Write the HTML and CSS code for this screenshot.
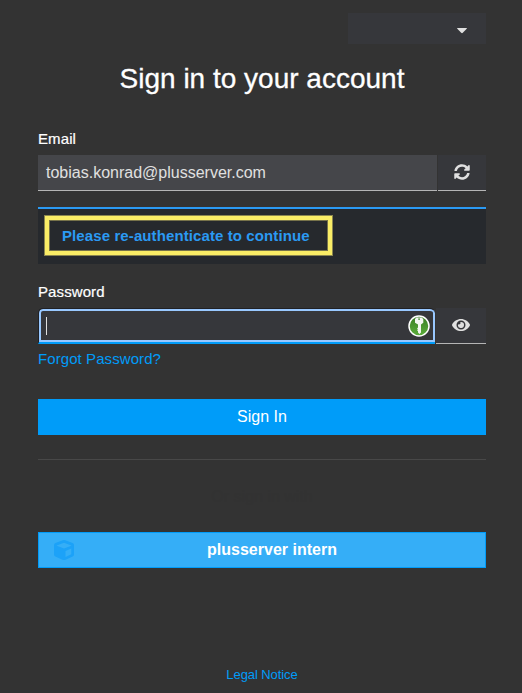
FILE: index.html
```html
<!DOCTYPE html>
<html lang="en">
<head>
<meta charset="utf-8">
<title>Sign in to your account</title>
<link rel="stylesheet" href="styles.css">
</head>
<body>
<main class="login">
  <div class="locale"><svg width="10" height="6" viewBox="0 0 10 6"><path d="M.5 0h9q.8 0 .2.7L5.800 4.800q-.8.8-1.600 0L.3.7Q-.3 0 .5 0z" fill="#e0e0e0"/></svg></div>
  <h1 class="title"><span>Sign in to your account</span></h1>
  <div class="label"><span>Email</span></div>
  <div class="group">
    <div class="field"><span class="email">tobias.konrad@plusserver.com</span></div>
    <button class="addon restart" aria-label="Restart login"><svg width="16" height="16" viewBox="0 0 512 512"><path fill="#e0e0e0" d="M370.7 133.3C339.5 104 298.900 88 255.800 88c-77.500.1-144.300 53.200-162.800 126.900-1.300 5.400-6.100 9.100-11.700 9.100H24.100c-7.500 0-13.200-6.800-11.800-14.200C33.900 94.900 134.800 8 256 8c66.400 0 126.800 26.100 171.300 68.700L463 41c15.100-15.100 41-4.400 41 17v134c0 13.300-10.700 24-24 24H346c-21.400 0-32.100-25.900-17-41l41.700-41.700zM32 296h134c21.400 0 32.100 25.900 17 41l-41.800 41.800c31.300 29.300 71.800 45.300 114.900 45.300 77.400-.1 144.300-53.100 162.800-126.800 1.300-5.400 6.100-9.100 11.700-9.100h57.300c7.500 0 13.200 6.800 11.800 14.200C478.100 417.100 377.200 504 256 504c-66.400 0-126.800-26.100-171.300-68.700L49 471c-15.100 15.100-41 4.400-41-17V320c0-13.300 10.700-24 24-24z"/></svg></button>
  </div>
  <div class="alert"><div class="highlight"><strong>Please re-authenticate to continue</strong></div></div>
  <div class="label"><span class="password-label">Password</span></div>
  <div class="group">
    <div class="field password"><i class="caret"></i>
      <svg class="key" width="24" height="24" viewBox="0 0 24 24"><defs><linearGradient id="g" x2="0" y2="1"><stop stop-color="#397d24"/><stop offset="1" stop-color="#5cae3b"/></linearGradient></defs><circle cx="12" cy="12" r="10" fill="url(#g)" stroke="#fff" stroke-width="1.500"/><path fill="#f4f6f2" fill-rule="evenodd" d="M9.500 3.500h5L16.300 5v3.700L14 10.400v8.200l-1.500 1.500-1.500-1.500v-1.500l-1-.8 1-1-1-.9 1-1v-3L8 8.700V5zM11.200 4.500v1.300h1.800V4.500z"/></svg>
    </div>
    <button class="addon eye" aria-label="Show password"><svg width="18" height="16" viewBox="0 0 576 512"><path fill="#e0e0e0" d="M572.5 241.4C518.300 135.600 410.900 64 288 64S57.700 135.600 3.500 241.400a32.400 32.400 0 0 0 0 29.200C57.700 376.400 165.100 448 288 448s230.300-71.600 284.500-177.400a32.400 32.400 0 0 0 0-29.200zM288 400a144 144 0 1 1 144-144 143.900 143.900 0 0 1-144 144zm0-240a95.300 95.300 0 0 0-25.300 3.800 47.900 47.900 0 0 1-66.900 66.900A95.800 95.800 0 1 0 288 160z"/></svg></button>
  </div>
  <a class="forgot"><span>Forgot Password?</span></a>
  <button class="submit"><span>Sign In</span></button>
  <hr>
  <div class="social">Or sign in with</div>
  <button class="provider"><svg width="20" height="20" viewBox="0 0 20 20"><path fill="#1ca2f8" fill-rule="evenodd" d="M8.700.3q1.300-.5 2.600 0l7.200 2.700Q20 3.600 20 5.100v9.300q0 1.500-1.300 2.200L11 20q-1 .5-2 0l-7.700-3.400Q0 15.900 0 14.400V5.100Q0 3.600 1.500 3zM10 2.800 2.700 5.500v.2L10 8.500l7.300-2.800v-.2zM11.500 11v5.900l5.800-2.700V8.600z"/></svg><strong>plusserver intern</strong></button>
  <footer><a>Legal Notice</a></footer>
</main>
</body>
</html>
```
FILE: styles.css
```css
* { box-sizing: border-box; }
body { margin: 0; background: #333; color: #fff; font: 16px/24px "Liberation Sans", Arial, sans-serif; }
.login { width: 448px; height: 693px; margin-left: 38px; padding-top: 13px; display: flex; flex-direction: column; }
svg { display: block; flex: none; }
span, strong { white-space: nowrap; }
button { border: 0; padding: 0; font: inherit; color: inherit; }
.locale { align-self: flex-end; width: 138px; height: 31px; background: #36373b; display: flex; align-items: center; padding: 4px 0 0 109px; }
.title { margin: 17px 0 0; height: 36px; font-size: 28px; line-height: 36px; font-weight: 400; text-align: center; -webkit-text-stroke: .3px; }
.label { height: 24px; margin-top: 30px; font-size: 15px; letter-spacing: .1px; -webkit-text-stroke: .2px; }
.group { display: flex; height: 36px; margin-top: 4px; gap: 1px; }
.field { width: 399px; background: #45464a; border-bottom: 1px solid #b5b5b5; padding: 6px 8px; color: #e0e0e0; }
.addon { width: 48px; background: #36373b; border-bottom: 1px solid #b5b5b5; display: flex; align-items: center; justify-content: center; }
.restart { padding-bottom: 2px; }
.alert { height: 57px; margin-top: 16px; background: #26292d; border-top: 2px solid #2b9af3; padding: 6px; }
.highlight { width: 289px; height: 41px; border: 5px solid #faed66; outline: 1px solid #8b8650; outline-offset: -1px; box-shadow: inset 0 0 0 1px #77734a; padding: 4px 13px; color: #2b9af3; font-size: 15px; letter-spacing: .1px; }
.alert + .label { margin-top: 16px; }
.field.password { width: 397px; background: #36373b; border: 1px solid #202125; border-right-width: 0; border-bottom: 2px solid #009cf9; border-radius: 5px 5px 0 0; padding: 0 4px 0 7px; display: flex; align-items: center; justify-content: space-between; box-shadow: inset 0 0 0 2px #99c8ff; }
.caret { width: 1px; height: 18px; background: #e0e0e0; }
.addon.eye { width: 50px; padding-bottom: 2px; }
.forgot { height: 24px; margin-top: 3px; color: #009cf9; font-size: 15px; letter-spacing: .08px; }
.submit { height: 36px; margin-top: 28px; background: #009cf9; }
hr { width: 100%; height: 1px; margin: 24px 0 0; border: 0; background: #484848; }
.social { margin-top: 25px; text-align: center; color: #323232; }
.provider { height: 36px; margin-top: 23px; background: #35aef7; border: 1px solid #009cf9; display: grid; grid-template-columns: 20px 1fr 15px; align-items: center; padding-left: 15px; }
.provider strong { text-align: center; }
footer { margin-top: 95px; text-align: center; font-size: 13px; letter-spacing: -.08px; color: #009cf9; }
```
